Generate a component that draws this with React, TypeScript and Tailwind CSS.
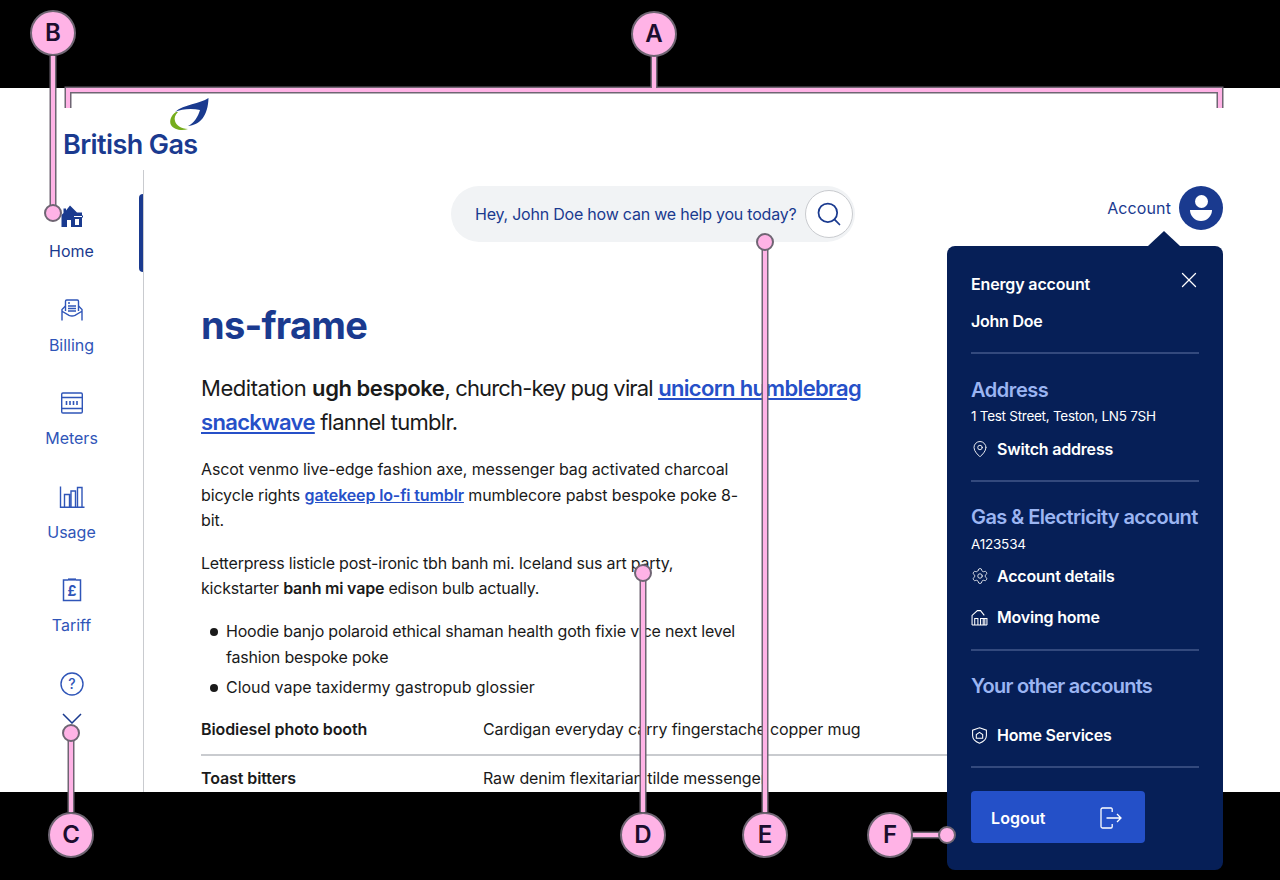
import { Search, X, MapPin, Settings } from "lucide-react";

const navy = "text-[#1a3a8f]";

function HomeIcon() {
  return (
    <svg width="24" height="24" viewBox="0 0 24 24" className="text-[#1a3a8f]">
      <path fill="currentColor" d="M1.500 23V11L3.500 9V4.500H6V6.500L10 1.500 17 8.500h5v3h1v2H22V23Z" />
      <rect x="7" y="16" width="4" height="7" fill="white" />
      <rect x="15" y="15" width="4" height="6" fill="white" />
      <path stroke="white" strokeWidth="1" d="M14 12.500h8" />
    </svg>
  );
}

function BillingIcon() {
  return (
    <svg width="24" height="24" viewBox="0 0 24 24" fill="none" stroke="currentColor" strokeWidth="1.400">
      <path d="M5.500 13V3.200c0-.7.500-1.200 1.200-1.200h10.600c.7 0 1.200.5 1.200 1.200V13" />
      <path d="M5.500 8L2 11.500V22.500M18.500 8L22 11.500V22.500M2.500 13.500l6.500 3.800c2 1 4 1 6 0l6.500-3.800" />
      <path d="M8 5h2M8 8h8M8 10.500h8M8 13h8" />
    </svg>
  );
}

function MetersIcon() {
  return (
    <svg width="24" height="24" viewBox="0 0 24 24" fill="none" stroke="currentColor" strokeWidth="1.400">
      <rect x="1.700" y="2" width="20.600" height="20" rx="1.200" />
      <path d="M2 6.500h20M2 17.500h20" />
      <path d="M6.500 10v4M10 10v4M13.500 10v4M17 10v4" strokeWidth="1.600" />
    </svg>
  );
}

function UsageIcon() {
  return (
    <svg width="26" height="24" viewBox="0 0 26 24" fill="none" stroke="currentColor" strokeWidth="1.400">
      <path d="M1.500 1.500v20.800h24" />
      <path d="M5.500 22V9.500h5V22M12 22V6h4.500v16M18.500 22V2.500H23V22" />
    </svg>
  );
}

function TariffIcon() {
  return (
    <svg width="20" height="24" viewBox="0 0 20 24" fill="none">
      <path stroke="currentColor" strokeWidth="1.500" d="M6 2H1.500v20.500h17V2H14" />
      <path stroke="currentColor" strokeWidth="2.200" d="M6 1.500h8" />
      <text x="10" y="18" textAnchor="middle" fontSize="14" fontWeight="700" fill="currentColor" fontFamily="Inter, sans-serif">£</text>
    </svg>
  );
}

function HelpIcon() {
  return (
    <svg width="24" height="24" viewBox="0 0 24 24" fill="none">
      <circle cx="12" cy="12" r="11" stroke="currentColor" strokeWidth="1.400" />
      <text x="12" y="17" textAnchor="middle" fontSize="14" fontWeight="500" fill="currentColor" fontFamily="Inter, sans-serif">?</text>
    </svg>
  );
}

function MovingIcon() {
  return (
    <svg width="17" height="17" viewBox="0 0 16 16" fill="none" stroke="white" strokeWidth="1">
      <path d="M1 15V6l5-4.500h3L12.500 6M1 15h14M3.500 15V9h3v6M9 15V9h2.500v6M11.500 9H15v6M13 9v6" />
    </svg>
  );
}

function ShieldIcon() {
  return (
    <svg width="17" height="17" viewBox="0 0 16 16" fill="none" stroke="white" strokeWidth="1">
      <path d="M8 .8l6.500 2.200v5c0 3.500-3 6-6.500 7.200C4.500 14 1.500 11.500 1.500 8V3z" />
      <path d="M5 10.500V7l3-2 3 2v3.500z" />
    </svg>
  );
}

function LogoutIcon() {
  return (
    <svg width="22" height="22" viewBox="0 0 22 22" fill="none" stroke="white" strokeWidth="1.300">
      <path d="M11 1H2.500C1.700 1 1 1.700 1 2.500v17c0 .8.700 1.500 1.500 1.500H11c.8 0 1.200-.6 1.200-1.200V17M12.200 5V2.500C12.200 1.700 11.800 1 11 1" />
      <path d="M6.500 11H21M17 7l4 4-4 4" />
    </svg>
  );
}

function NavItem({ label, icon, color, active }: { label: string; icon: React.ReactNode; color: string; active?: boolean }) {
  return (
    <div className={`relative h-[78px] pt-[10px] flex flex-col items-center ${color}`}>
      <div className="h-6 flex items-center justify-center">{icon}</div>
      <div className="mt-[11px] text-[16px] leading-6 tracking-[0px]">{label}</div>
      {active && <div className="absolute right-0 top-0 h-[78px] w-1 rounded-l-sm bg-[#1a3a8f]" />}
    </div>
  );
}

function PanelLink({ icon, label, className }: { icon: React.ReactNode; label: string; className: string }) {
  return (
    <div className={`flex items-center h-6 ${className}`}>
      <div className="w-[26px] flex items-center">{icon}</div>
      <span className="text-[16px] font-semibold tracking-[-0.2px] text-white">{label}</span>
    </div>
  );
}

function Rule({ className }: { className: string }) {
  return <div className={`h-0.5 bg-[#33497d] ${className}`} />;
}

function Badge({ x, y, letter }: { x: number; y: number; letter: string }) {
  return (
    <div
      className="absolute w-[46px] h-[46px] rounded-full bg-[#ffb3e6] border-2 border-[#6f6573] flex items-center justify-center text-[24px] font-semibold text-[#1c0d2e]"
      style={{ left: x - 23, top: y - 23 }}
    >
      {letter}
    </div>
  );
}

function Callouts() {
  const lines = [
    "M68 108V90H1220V108",
    "M654 56V90",
    "M53 56V213",
    "M71 733V812",
    "M643 573V812",
    "M765 242V812",
    "M912 835H947",
  ];
  const dots = [
    [53, 213],
    [71, 733],
    [643, 573],
    [765, 242],
    [947, 835],
  ];
  return (
    <div className="absolute inset-0 pointer-events-none">
      <svg width="1280" height="880" className="absolute inset-0" fill="none">
        {lines.map((d) => (
          <path key={d + "o"} d={d} stroke="#6f6573" strokeWidth="7" />
        ))}
        {lines.map((d) => (
          <path key={d} d={d} stroke="#ffb3e6" strokeWidth="4" />
        ))}
        {dots.map(([cx, cy]) => (
          <circle key={cx} cx={cx} cy={cy} r="8" fill="#ffb3e6" stroke="#6f6573" strokeWidth="2" />
        ))}
      </svg>
      <Badge x={654} y={34} letter="A" />
      <Badge x={53} y={33} letter="B" />
      <Badge x={71} y={835} letter="C" />
      <Badge x={643} y={835} letter="D" />
      <Badge x={765} y={835} letter="E" />
      <Badge x={890} y={835} letter="F" />
    </div>
  );
}

export default function App() {
  return (
    <div className="relative w-[1280px] h-[880px] bg-black overflow-hidden font-['Inter',sans-serif]">
      <div className="h-[88px]" />

      <div className="h-[704px] bg-white overflow-hidden flex flex-col">
        {/* Logo */}
        <div className="h-[82px] shrink-0 pl-[63px] relative">
          <svg width="42" height="36" viewBox="0 0 42 36" className="absolute left-[169px] top-[9px]">
            <path fill="#1a3a8f" d="M39.500 1C31 7 15 7 6 15c6-3 17-4 25-2-2 7-6 13-12 16 12-1 20-10 20.500-28z" />
            <path fill="#76ad1c" d="M7 15C2 18 0 24 2 28c3 5 11 6 17 4-7 0-12-4-13-8-1-3 0-6 3-9z" />
          </svg>
          <div className={`absolute left-[63px] top-[39px] text-[27px] leading-9 font-semibold tracking-[-0.6px] ${navy}`}>British Gas</div>
        </div>

        <div className="flex flex-1 min-h-0">
          {/* Menu lateral */}
          <aside className="w-[144px] shrink-0 border-r border-[#c9cbcf] pt-6 flex flex-col">
            <div className="flex flex-col gap-[15.6px]">
              <NavItem label="Home" icon={<HomeIcon />} color={navy} active />
              <NavItem label="Billing" icon={<BillingIcon />} color="text-[#2f55b8]" />
              <NavItem label="Meters" icon={<MetersIcon />} color="text-[#2f55b8]" />
              <NavItem label="Usage" icon={<UsageIcon />} color="text-[#2f55b8]" />
              <NavItem label="Tariff" icon={<TariffIcon />} color="text-[#2f55b8]" />
            </div>
            <div className="mt-[26px] flex flex-col items-center text-[#2f55b8]">
              <HelpIcon />
              <svg width="20" height="11" viewBox="0 0 20 11" fill="none" className="mt-[17px] text-[#1a3a8f]">
                <path stroke="currentColor" strokeWidth="1.500" d="M1 1l9 9 9-9" />
              </svg>
            </div>
          </aside>

          {/* Conteudo */}
          <main className="flex-1 min-w-0 pt-4 pl-[57px] pr-[57px]">
            <div className="flex items-start">
              <div className="ml-[250px] w-[404px] h-14 rounded-full bg-[#f1f3f5] flex items-center justify-between pl-6 pr-0.5">
                <span className="text-[16px] tracking-[-0.22px] text-[#1a3a8f]">Hey, John Doe how can we help you today?</span>
                <div className="w-12 h-12 rounded-full bg-white border border-[#c9cbcf] flex items-center justify-center">
                  <Search size={28} strokeWidth={1.500} className="text-[#1a3a8f]" />
                </div>
              </div>
              <div className="ml-auto flex items-center gap-2">
                <span className={`text-[16px] tracking-[0.1px] ${navy}`}>Account</span>
                <div className="w-11 h-11 rounded-full bg-[#1a3a8f] flex flex-col items-center justify-center">
                  <div className="w-[13px] h-[13px] rounded-full bg-white" />
                  <div className="mt-[2px] w-[22px] h-[11px] rounded-b-full rounded-t-[3px] bg-white" />
                </div>
              </div>
            </div>

            <h1 className={`mt-[59px] text-[38px] leading-[48px] font-bold tracking-[-0.75px] ${navy}`}>ns-frame</h1>

            <p className="mt-[22px] w-[680px] text-[22px] leading-[34px] tracking-[-0.85px] text-[#1a1a1a]">
              <span className="tracking-[-0.45px]">Meditation </span>
              <b className="font-semibold tracking-[-0.45px]">ugh bespoke</b>, church-key pug viral{" "}
              <a className="font-semibold text-[#2650c8] underline tracking-[-0.66px]">unicorn humblebrag snackwave</a>{" "}
              <span className="tracking-[-0.7px]">flannel tumblr.</span>
            </p>

            <p className="mt-[18px] w-[540px] text-[16px] leading-[25.6px] tracking-[-0.13px] text-[#1a1a1a]">
              Ascot venmo live-edge fashion axe, messenger bag activated charcoal bicycle rights{" "}
              <a className="font-semibold text-[#2650c8] underline">gatekeep lo-fi tumblr</a> mumblecore pabst bespoke poke 8-bit.
            </p>

            <p className="mt-[17px] w-[540px] text-[16px] leading-[25.6px] tracking-[-0.2px] text-[#1a1a1a]">
              Letterpress listicle post-ironic tbh banh mi. Iceland sus art party, kickstarter <b className="font-semibold">banh mi vape</b> edison bulb actually.
            </p>

            <ul className="mt-[17px] w-[545px] flex flex-col gap-[5px] text-[16px] leading-[25.6px] tracking-[-0.2px] text-[#1a1a1a]">
              <li className="flex">
                <span className="w-[25px] shrink-0 pl-[9px] pt-[9px]"><span className="block w-2 h-2 rounded-full bg-[#1a1a1a]" /></span>
                <span>Hoodie banjo polaroid ethical shaman health goth fixie vice next level fashion bespoke poke</span>
              </li>
              <li className="flex">
                <span className="w-[25px] shrink-0 pl-[9px] pt-[9px]"><span className="block w-2 h-2 rounded-full bg-[#1a1a1a]" /></span>
                <span className="tracking-[-0.05px]">Cloud vape taxidermy gastropub glossier</span>
              </li>
            </ul>

            <div className="mt-[16px] text-[16px] leading-[25.6px] tracking-[-0.1px] text-[#1a1a1a]">
              <div className="flex pb-[12px] border-b-2 border-[#c9cbcf]">
                <span className="w-[282px] font-semibold">Biodiesel photo booth</span>
                <span>Cardigan everyday carry fingerstache copper mug</span>
              </div>
              <div className="flex pt-[10px]">
                <span className="w-[282px] font-semibold">Toast bitters</span>
                <span>Raw denim flexitarian tilde messenger</span>
              </div>
            </div>
          </main>
        </div>
      </div>

      {/* Menu da conta */}
      <div className="absolute left-[947px] top-[246px] w-[276px] h-[624px] rounded-lg bg-[#061f57] px-6 pt-[26px] text-white">
        <div className="absolute -top-[15px] left-[201px] w-8 h-[15px] bg-[#061f57] [clip-path:polygon(50%_0,100%_100%,0_100%)]" />
        <X size={26} strokeWidth={1.200} className="absolute right-[21px] top-[21px]" />
        <div className="text-[16px] leading-6 font-semibold tracking-[-0.15px]">Energy account</div>
        <div className="mt-[13px] text-[16px] leading-6 font-semibold tracking-[-0.25px]">John Doe</div>
        <Rule className="mt-[19px]" />
        <div className="mt-[22px] text-[20px] leading-7 font-semibold tracking-[-0.45px] text-[#9bb5f2]">Address</div>
        <div className="mt-[2px] text-[13.5px] leading-5 tracking-[-0.27px]">1 Test Street, Teston, LN5 7SH</div>
        <PanelLink className="mt-[11px]" label="Switch address" icon={<MapPin size={18} strokeWidth={1.200} />} />
        <Rule className="mt-[19px]" />
        <div className="mt-[21px] text-[20px] leading-7 font-semibold tracking-[-0.6px] text-[#9bb5f2] whitespace-nowrap">Gas &amp; Electricity account</div>
        <div className="mt-[3px] text-[13.5px] leading-5 tracking-[-0.2px]">A123534</div>
        <PanelLink className="mt-[10px]" label="Account details" icon={<Settings size={18} strokeWidth={1.100} />} />
        <PanelLink className="mt-[17px]" label="Moving home" icon={<MovingIcon />} />
        <Rule className="mt-[20px]" />
        <div className="mt-[21px] text-[20px] leading-7 font-semibold tracking-[-0.75px] text-[#9bb5f2]">Your other accounts</div>
        <PanelLink className="mt-[23px]" label="Home Services" icon={<ShieldIcon />} />
        <Rule className="mt-[19px]" />
        <div className="mt-[23px] w-[174px] h-[52px] rounded bg-[#2450c8] flex items-center justify-between pl-5 pr-[23px] pt-px">
          <span className="text-[16px] font-semibold tracking-[0.1px]">Logout</span>
          <LogoutIcon />
        </div>
      </div>

      <Callouts />
    </div>
  );
}
